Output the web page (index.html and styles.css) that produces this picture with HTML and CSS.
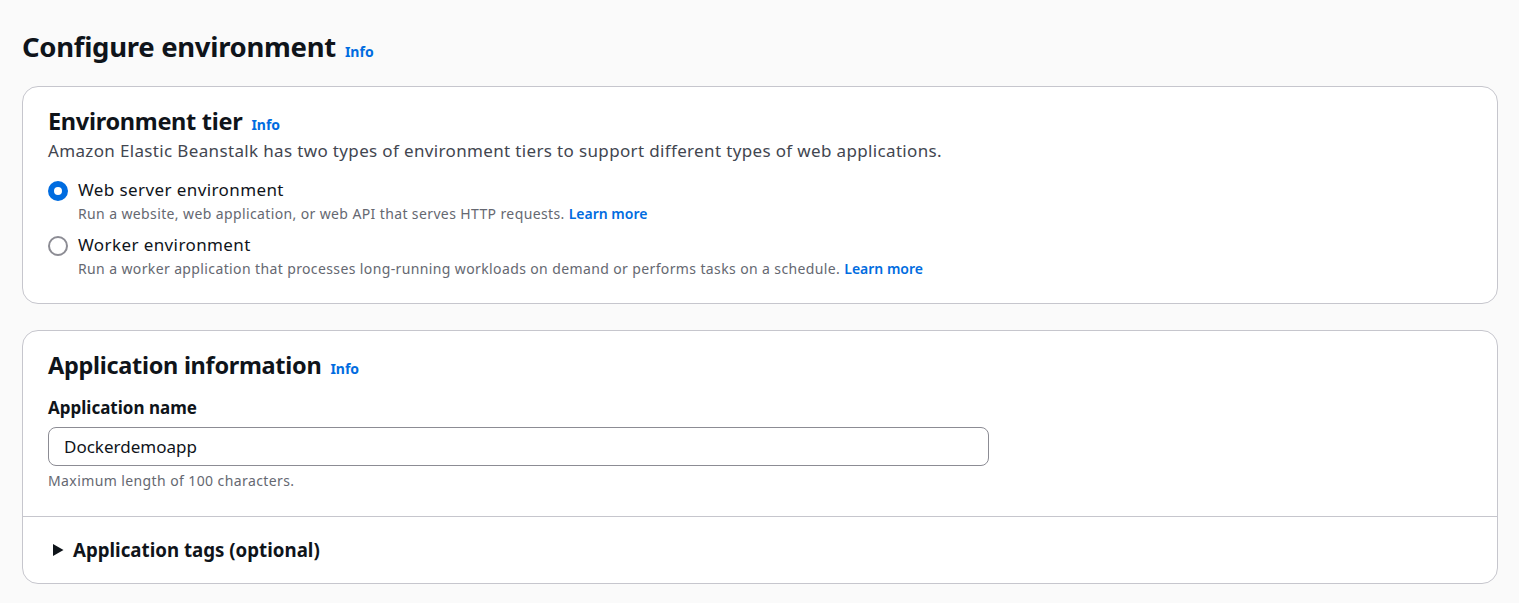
FILE: index.html
```html
<!DOCTYPE html>
<html lang="en">
<head>
<meta charset="utf-8">
<title>Configure environment</title>
<link rel="stylesheet" href="styles.css">
</head>
<body>
<main class="page">
  <header class="page-header">
    <h1 class="page-title">Configure environment</h1>
    <a class="info" href="#">Info</a>
  </header>

  <section class="container">
    <div class="container-body">
      <div class="section-header">
        <h2 class="section-title">Environment tier</h2>
        <a class="info" href="#">Info</a>
      </div>
      <p class="section-desc">Amazon Elastic Beanstalk has two types of environment tiers to support different types of web applications.</p>
      <div class="radio-group">
        <label class="radio">
          <span class="radio-ctrl checked"></span>
          <span class="radio-text">
            <span class="radio-label">Web server environment</span>
            <span class="radio-desc">Run a website, web application, or web API that serves HTTP requests. <a class="link" href="#">Learn more</a></span>
          </span>
        </label>
        <label class="radio">
          <span class="radio-ctrl"></span>
          <span class="radio-text">
            <span class="radio-label">Worker environment</span>
            <span class="radio-desc">Run a worker application that processes long-running workloads on demand or performs tasks on a schedule. <a class="link" href="#">Learn more</a></span>
          </span>
        </label>
      </div>
    </div>
  </section>

  <section class="container">
    <div class="container-body app-body">
      <div class="section-header">
        <h2 class="section-title">Application information</h2>
        <a class="info" href="#">Info</a>
      </div>
      <div class="field">
        <label class="field-label">Application name</label>
        <div class="input">Dockerdemoapp</div>
        <div class="field-hint">Maximum length of 100 characters.</div>
      </div>
    </div>
    <div class="expander">
      <svg class="caret" width="12" height="14" viewBox="0 0 12 14"><path d="M1 1 L11.5 7 L1 13 Z" fill="#0f141a"/></svg>
      <span class="expander-label">Application tags (optional)</span>
    </div>
  </section>
</main>
</body>
</html>
```

FILE: styles.css
```css
* { box-sizing: border-box; }
html, body { margin: 0; padding: 0; }
body {
  background: #fafafa;
  font-family: "Noto Sans", "Open Sans", sans-serif;
  color: #0f141a;
}
.page {
  padding: 26px 21px 0 22px;
  display: flex;
  flex-direction: column;
  gap: 26px;
}
.page-header {
  display: flex;
  align-items: baseline;
  gap: 9px;
  height: 42px;
  margin-bottom: -8px;
}
.page-title {
  margin: 0;
  font-size: 27.5px;
  line-height: 42px;
  font-weight: 700;
  letter-spacing: -0.3px;
}
.info {
  color: #006ce0;
  font-size: 14px;
  font-weight: 700;
  letter-spacing: 0;
  text-decoration: none;
}
.container {
  background: #fff;
  border: 1px solid #c6c6cd;
  border-radius: 16px;
}
.container-body {
  padding: 19px 25px 21px 25px;
}
.section-header {
  display: flex;
  align-items: baseline;
  gap: 9px;
}
.section-title {
  margin: 0;
  font-size: 23.5px;
  line-height: 30px;
  font-weight: 700;
  letter-spacing: -0.3px;
}
.section-desc {
  margin: 0;
  font-size: 17px;
  line-height: 30px;
  letter-spacing: 0.35px;
  color: #424650;
}
.radio-group {
  display: flex;
  flex-direction: column;
  gap: 7px;
  margin-top: 13px;
}
.radio {
  display: flex;
  align-items: flex-start;
  gap: 10px;
}
.radio-ctrl {
  width: 20px;
  height: 20px;
  border-radius: 50%;
  border: 2px solid #8c8c94;
  margin-top: 2px;
  flex: none;
}
.radio-ctrl.checked {
  border: 6px solid #006ce0;
}
.radio-text {
  display: flex;
  flex-direction: column;
}
.radio-label {
  font-size: 17px;
  line-height: 22px;
  letter-spacing: 0.4px;
}
.radio-desc {
  font-size: 14px;
  line-height: 26px;
  letter-spacing: 0.38px;
  color: #656871;
}
.link {
  color: #006ce0;
  text-decoration: none;
  font-weight: 600;
  letter-spacing: 0;
}
.app-body { padding-bottom: 25px; }
.field {
  margin-top: 17px;
  display: flex;
  flex-direction: column;
}
.field-label {
  font-size: 17px;
  font-weight: 700;
  line-height: 22px;
}
.input {
  margin-top: 8px;
  width: 941px;
  height: 39px;
  border: 1px solid #8c8c94;
  border-radius: 8px;
  padding: 0 15px;
  font-size: 17px;
  line-height: 37px;
  color: #0f141a;
}
.field-hint {
  margin-top: 5px;
  font-size: 14px;
  line-height: 20px;
  letter-spacing: 0.4px;
  color: #656871;
}
.expander {
  border-top: 1px solid #c6c6cd;
  padding: 21px 25px 21px 29px;
  display: flex;
  align-items: center;
  gap: 9px;
}
.caret { flex: none; }
.expander-label {
  font-size: 18.7px;
  font-weight: 700;
  line-height: 24px;
}
```
